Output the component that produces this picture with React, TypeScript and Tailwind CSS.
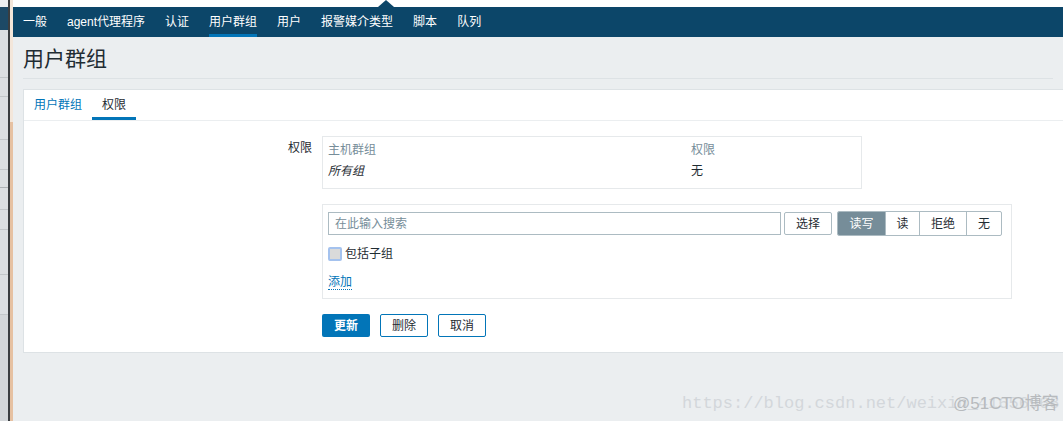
import React from 'react';

const font = { fontFamily: '"Liberation Sans", Arial, "Noto Sans CJK SC", sans-serif' };

const menu = ['一般', 'agent代理程序', '认证', '用户群组', '用户', '报警媒介类型', '脚本', '队列'];

function SideStrip() {
  // another window peeking in at the left edge
  return (
    <div className="flex h-full shrink-0">
      <div className="flex w-[8px] flex-col bg-[#dcdfe2]">
        <div className="h-[7px] bg-[#eceef0]" />
        <div className="h-[23px] bg-[#1d4966]" />
        <div className="h-[48px] border-b border-[#c3c7ca]" />
        <div className="h-[19px] border-b border-[#c3c7ca]" />
        <div className="h-[43px] border-b border-[#c3c7ca]" />
        <div className="h-[30px] border-b border-[#c3c7ca]" />
        <div className="h-[18px] border-b border-[#aeb2b5]" />
        <div className="h-[22px] border-b border-[#c3c7ca]" />
        <div className="h-[20px] border-b border-[#c3c7ca]" />
        <div className="h-[45px] border-b border-[#c3c7ca]" />
        <div className="h-[40px] border-b border-[#c3c7ca]" />
        <div className="flex-1 bg-[#d3d6d9]" />
      </div>
      <div className="w-[2px] bg-[#3a3d40]" />
      <div className="flex w-[3px] flex-col">
        <div className="h-[122px] bg-[#f3e6da]" />
        <div className="flex-1 bg-[#e6c1a2]" />
      </div>
    </div>
  );
}

function Header() {
  return (
    <div className="flex flex-col">
      <div className="flex h-[7px] bg-white">
        <div className="w-[365px]" />
        <div className="h-0 w-0 border-x-[8px] border-b-[7px] border-x-transparent border-b-[#0c4669]" />
      </div>
      <nav className="flex h-[30px] items-stretch gap-[20px] bg-[#0c4669] pl-[10px] text-[12px] text-white">
        {menu.map((m) => (
          <div
            key={m}
            className={
              'flex items-center border-b-[3px] pt-[3px] ' +
              (m === '用户群组' ? 'border-[#0275b8]' : 'border-transparent')
            }
          >
            {m}
          </div>
        ))}
      </nav>
    </div>
  );
}

function Btn({ children, className = '' }: { children: React.ReactNode; className?: string }) {
  return (
    <div className={'flex h-[23px] items-center justify-center text-[12px] ' + className}>{children}</div>
  );
}

function PermissionForm() {
  return (
    <div className="flex pt-[15px] pb-[15px]">
      <div className="w-[288px] pt-[3px] text-right text-[12px] text-[#1f2c33]">权限</div>
      <div className="ml-[10px] flex flex-col">
        {/* existing permissions */}
        <div className="w-[540px] border border-[#e6e9eb] px-[5px] pt-[2px] pb-[7px] text-[12px]">
          <div className="flex h-[21px] items-center text-[#768d99]">
            <div className="w-[363px]">主机群组</div>
            <div>权限</div>
          </div>
          <div className="flex h-[21px] items-center text-[#1f2c33]">
            <div className="w-[363px] italic">所有组</div>
            <div>无</div>
          </div>
        </div>

        {/* add new */}
        <div className="mt-[15px] w-[690px] border border-[#e6e9eb] px-[5px] pt-[6px] pb-[8px] text-[12px]">
          <div className="flex items-center">
            <div className="flex h-[23px] w-[453px] items-center border border-[#acbbc2] px-[6px] text-[#768d99]">
              在此输入搜索
            </div>
            <Btn className="ml-[3px] w-[48px] rounded-[2px] border border-[#acbbc2] bg-white text-[#1f2c33]">
              选择
            </Btn>
            <div className="ml-[5px] flex overflow-hidden rounded-[2px] border border-[#acbbc2]">
              <Btn className="h-[21px] w-[47px] bg-[#768d99] text-white">读写</Btn>
              <Btn className="h-[21px] w-[34px] border-l border-[#acbbc2] text-[#1f2c33]">读</Btn>
              <Btn className="h-[21px] w-[47px] border-l border-[#acbbc2] text-[#1f2c33]">拒绝</Btn>
              <Btn className="h-[21px] w-[35px] border-l border-[#acbbc2] text-[#1f2c33]">无</Btn>
            </div>
          </div>
          <label className="mt-[9px] flex h-[18px] items-center gap-[3px] text-[#1f2c33]">
            <span className="h-[14px] w-[14px] rounded-[2px] border-2 border-[#a4c2ee] bg-[#dadada]" />
            包括子组
          </label>
          <div className="mt-[12px] flex">
            <span className="border-b border-dotted border-[#0275b8] text-[#0275b8] leading-[14px]">添加</span>
          </div>
        </div>

        <div className="mt-[15px] flex gap-[10px]">
          <Btn className="w-[48px] rounded-[2px] bg-[#0275b8] font-bold text-white">更新</Btn>
          <Btn className="w-[48px] rounded-[2px] border border-[#0275b8] bg-white text-[#1f2c33]">删除</Btn>
          <Btn className="w-[48px] rounded-[2px] border border-[#0275b8] bg-white text-[#1f2c33]">取消</Btn>
        </div>
      </div>
    </div>
  );
}

export default function App() {
  return (
    <div className="relative flex h-[421px] w-[1063px] overflow-hidden bg-[#ebeef0]" style={font}>
      <SideStrip />
      <div className="flex min-w-0 flex-1 flex-col">
        <Header />
        <div className="px-[10px]">
          <div className="flex h-[42px] items-end border-b border-[#dde2e5] pb-[4px] text-[21px] text-[#1f2c33]">
            用户群组
          </div>
          <div className="mt-[10px] -mr-[20px] border border-[#dde2e5] bg-white">
            <div className="flex h-[31px] border-b border-[#ebeef0] text-[12px]">
              <div className="flex items-center border-b-[3px] border-transparent px-[10px] pt-[3px] text-[#0275b8]">
                用户群组
              </div>
              <div className="flex items-center border-b-[3px] border-[#0275b8] px-[10px] pt-[3px] text-[#1f2c33]">
                权限
              </div>
            </div>
            <PermissionForm />
          </div>
        </div>
      </div>

      {/* watermark */}
      <div className="absolute left-[682px] top-[391px] whitespace-nowrap text-[17px] text-[#d3d7db]" style={{ fontFamily: '"Liberation Mono", "Courier New", monospace' }}>
        https://blog.csdn.net/weixin_41656968
      </div>
      <div className="absolute left-[953px] top-[391px] whitespace-nowrap text-[17px] text-[#b7babd]" style={{ fontFamily: '"Liberation Sans", "Noto Sans CJK SC", sans-serif' }}>
        @51CTO博客
      </div>
    </div>
  );
}
